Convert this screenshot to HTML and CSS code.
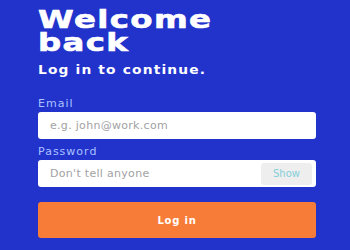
FILE: index.html
```html
<!DOCTYPE html>
<html>
<head>
  <title>Log in</title>
  <link rel="stylesheet" href="styles.css">
</head>
<body>
  <div class="login">
    <h1 class="title">Welcome<br>back</h1>
    <p class="subtitle">Log in to continue.</p>
    <form class="login-form">
      <label class="field-label" for="email">Email</label>
      <div class="field">
        <input id="email" type="text" placeholder="e.g. john@work.com">
      </div>
      <label class="field-label" for="password">Password</label>
      <div class="field">
        <input id="password" type="password" placeholder="Don't tell anyone">
        <button type="button" class="show-button">Show</button>
      </div>
      <button type="submit" class="login-button">Log in</button>
    </form>
  </div>
</body>
</html>
```

FILE: styles.css
```css
body {
  margin: 0;
  padding: 0;
  background-color: #2233cc;
  font-family: "DejaVu Sans", "Open Sans", sans-serif;
  overflow: hidden;
}
.login {
  width: 278px;
  margin-left: 38px;
  padding-top: 9px;
}
.title {
  width: fit-content;
  margin: 0;
  color: #fff;
  font-size: 24px;
  line-height: 23px;
  font-weight: 900;
  letter-spacing: 1px;
  -webkit-text-stroke: 0.6px #fff;
  transform: scaleX(1.35);
  transform-origin: left;
}
.subtitle {
  width: fit-content;
  margin: 8px 0 0;
  color: #fff;
  font-size: 12px;
  line-height: 14px;
  font-weight: bold;
  letter-spacing: 1px;
  transform: scaleX(1.15);
  transform-origin: left;
}
.login-form {
  display: flex;
  flex-direction: column;
  margin-top: 20px;
}
.field-label {
  color: #abc2ff;
  font-size: 11px;
  line-height: 14px;
  letter-spacing: 1px;
  margin-bottom: 1px;
}
.field {
  display: flex;
  align-items: center;
  height: 27px;
  background-color: #fff;
  border-radius: 3px;
  margin-bottom: 6px;
  padding: 0 4px 0 12px;
}
.field input {
  flex-grow: 1;
  min-width: 0;
  border: none;
  outline: none;
  background: transparent;
  font-family: inherit;
  font-size: 11px;
  letter-spacing: 0.3px;
  color: #333;
  padding: 0;
}
.field input::placeholder {
  color: #a2a2a2;
}
.show-button {
  width: 51px;
  height: 22px;
  background-color: #eeeeee;
  border: none;
  border-radius: 3px;
  color: #84cfd9;
  font-family: inherit;
  font-size: 10px;
}
.login-button {
  margin-top: 9px;
  height: 36px;
  background-color: #f77c37;
  border: none;
  border-radius: 3px;
  color: #fff;
  font-family: inherit;
  font-size: 10px;
  font-weight: bold;
  letter-spacing: 0.8px;
}
```
